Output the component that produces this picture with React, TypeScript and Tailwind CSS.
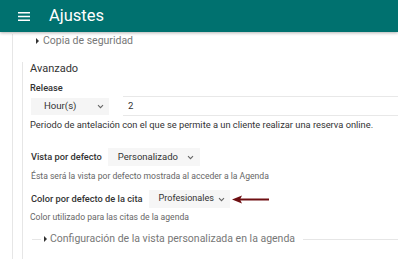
import React from "react";

const Chevron = () => (
  <svg width="7" height="5" viewBox="0 0 7 5" className="shrink-0">
    <path d="M1 1.2 L3.5 3.7 L6 1.2" fill="none" stroke="#666" strokeWidth="1.1" />
  </svg>
);

const Tri = () => (
  <svg width="3" height="6" viewBox="0 0 3 6" className="shrink-0">
    <path d="M0 0 L3 3 L0 6 Z" fill="#333" />
  </svg>
);

export default function App() {
  return (
    <div className="w-[398px] h-[259px] overflow-hidden bg-white text-[#333]" style={{ fontFamily: "Roboto, 'Liberation Sans', sans-serif" }}>
      <div className="h-[32px] bg-[#00716f] flex items-center shadow-[0_1px_3px_rgba(0,0,0,0.3)] relative z-10">
        <svg width="12" height="9" viewBox="0 0 12 9" className="ml-[18px]">
          <rect x="0" y="0" width="12" height="1.5" fill="white" />
          <rect x="0" y="3.75" width="12" height="1.5" fill="white" />
          <rect x="0" y="7.5" width="12" height="1.5" fill="white" />
        </svg>
        <span className="ml-[19px] text-white text-[16.5px] leading-none">Ajustes</span>
      </div>
      <div className="pl-[12px]">
        <div className="border-l border-[#e6e6e6] h-[227px]">
          <div className="flex items-center pl-[23px] h-[14px] mt-[2px] text-[10.5px] text-[#777] leading-none">
            <Tri />
            <span className="ml-[4px]">Copia de seguridad</span>
          </div>
          <div className="ml-[9px] mt-[14px] border-l border-[#e6e6e6] pl-[7px] h-[200px]">
            <div className="h-[14px] flex items-center text-[11px] text-[#333] mt-[4px]">Avanzado</div>
            <div className="h-[12px] mt-[6px] flex items-center text-[9.25px] font-medium text-[#333]">Release</div>
            <div className="flex items-center mt-[2px] h-[20px]">
              <div className="w-[78px] h-[17px] bg-[#f5f5f5] flex items-center justify-between pl-[13px] pr-[5px] ml-[1px] text-[9.6px] text-[#333]">
                <span>Hour(s)</span>
                <Chevron />
              </div>
              <div className="ml-[14px] flex-1 h-[20px] border-y border-[#e8e8e8] flex items-center pl-[5px] text-[9.6px] text-[#333]">2</div>
            </div>
            <div className="h-[12px] mt-[3px] flex items-center text-[9.3px] text-[#333] whitespace-nowrap">Periodo de antelación con el que se permite a un cliente realizar una reserva online.</div>
            <div className="flex items-center mt-[17px] h-[18px]">
              <span className="ml-[1px] text-[9.25px] font-medium text-[#333]">Vista por defecto</span>
              <div className="ml-[6px] w-[92px] h-[18px] bg-[#f6f6f6] flex items-center justify-between pl-[10px] pr-[6px] text-[9.5px] text-[#333]">
                <span>Personalizado</span>
                <Chevron />
              </div>
            </div>
            <div className="h-[12px] mt-[4px] flex items-center text-[8.6px] text-[#666] whitespace-nowrap ml-[1px]">Ésta será la vista por defecto mostrada al acceder a la Agenda</div>
            <div className="flex items-center mt-[8px] h-[18px]">
              <span className="ml-[1px] text-[9.25px] font-medium text-[#333]">Color por defecto de la cita</span>
              <div className="ml-[7px] w-[81px] h-[18px] bg-[#f6f6f6] flex items-center pl-[9px] gap-[4px] text-[9.1px] text-[#333]">
                <span>Profesionales</span>
                <Chevron />
              </div>
              <svg width="37" height="9" viewBox="0 0 37 9" className="ml-[2px]">
                <path d="M8 4.5 L37 4.5" stroke="#6e0f12" strokeWidth="2" />
                <path d="M0 4.5 L10 0.5 L8 4.5 L10 8.5 Z" fill="#6e0f12" />
              </svg>
            </div>
            <div className="h-[12px] mt-[3px] flex items-center text-[8.6px] text-[#666] whitespace-nowrap">Color utilizado para las citas de la agenda</div>
            <div className="flex items-center mt-[9px] h-[14px]">
              <div className="w-[9px] border-t border-[#e6e6e6] ml-[2px]" />
              <div className="ml-[3px]"><Tri /></div>
              <span className="ml-[3px] text-[10.5px] text-[#777] whitespace-nowrap">Configuración de la vista personalizada en la agenda</span>
              <div className="flex-1 ml-[8px] border-t border-[#e6e6e6]" />
            </div>
          </div>
        </div>
      </div>
    </div>
  );
}
